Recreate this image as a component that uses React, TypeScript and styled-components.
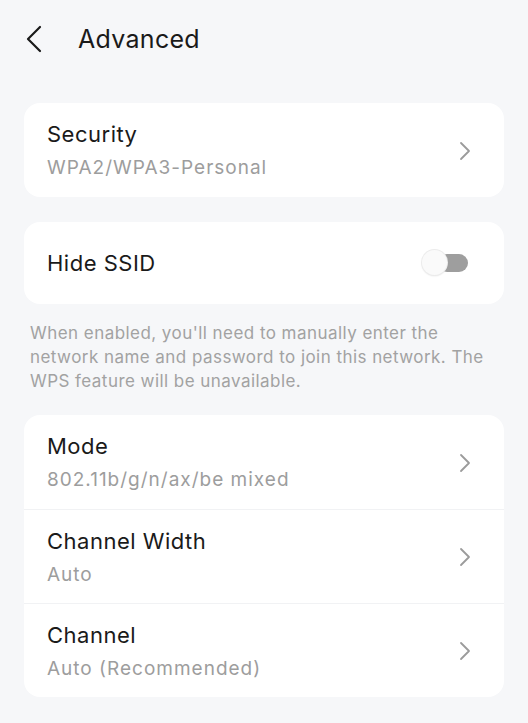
import styled, { createGlobalStyle } from 'styled-components'

const GlobalStyle = createGlobalStyle`
    html, body {
        margin: 0;
        padding: 0;
        background: #f6f7f9;
    }
    body {
        font-family: Inter, "Noto Sans", "Liberation Sans", sans-serif;
        -webkit-font-smoothing: antialiased;
    }
`

const rows = [
    { title: 'Mode', value: '802.11b/g/n/ax/be mixed' },
    { title: 'Channel Width', value: 'Auto' },
    { title: 'Channel', value: 'Auto (Recommended)' },
]

export default function App() {
    return (
        <Page>
            <GlobalStyle />
            <Header>
                <BackButton aria-label='back'>
                    <svg width='18' height='28' viewBox='0 0 18 28' fill='none'>
                        <path d='M15 2 L3 14 L15 26' stroke='#1a1a1a' strokeWidth='2.2' strokeLinecap='round' strokeLinejoin='round' />
                    </svg>
                </BackButton>
                <Title>Advanced</Title>
            </Header>

            <Card>
                <Row>
                    <RowText>
                        <RowTitle>Security</RowTitle>
                        <RowValue>WPA2/WPA3-Personal</RowValue>
                    </RowText>
                    <Chevron />
                </Row>
            </Card>

            <Card $gap={25}>
                <ToggleRow>
                    <RowTitle>Hide SSID</RowTitle>
                    <Toggle>
                        <Track />
                        <Knob />
                    </Toggle>
                </ToggleRow>
            </Card>

            <Hint>
                When enabled, you'll need to manually enter the network name and password to join this network. The WPS
                feature will be unavailable.
            </Hint>

            <Card $gap={22}>
                {rows.map((r, i) => (
                    <Row key={r.title} $divider={i > 0}>
                        <RowText>
                            <RowTitle>{r.title}</RowTitle>
                            <RowValue>{r.value}</RowValue>
                        </RowText>
                        <Chevron />
                    </Row>
                ))}
            </Card>
        </Page>
    )
}

function Chevron() {
    return (
        <ChevronWrap>
            <svg width='14' height='20' viewBox='0 0 14 20' fill='none'>
                <path d='M3 2 L11 10 L3 18' stroke='#9b9b9b' strokeWidth='1.8' strokeLinecap='round' strokeLinejoin='round' />
            </svg>
        </ChevronWrap>
    )
}

const Page = styled.div`
    min-height: 723px;
    box-sizing: border-box;
    padding: 0 24px 20px;
    display: flex;
    flex-direction: column;
`

const Header = styled.div`
    height: 78px;
    display: flex;
    align-items: center;
`

const BackButton = styled.button`
    background: none;
    border: none;
    padding: 0;
    margin-left: 1px;
    width: 20px;
    height: 28px;
    display: flex;
    align-items: center;
    cursor: pointer;
`

const Title = styled.h1`
    margin: 0 0 0 33px;
    font-size: 25px;
    font-weight: 400;
    color: #1a1a1a;
    letter-spacing: 0.3px;
`

const Card = styled.div<{ $gap?: number }>`
    margin-top: ${(p) => p.$gap ?? 25}px;
    background: #fff;
    border-radius: 16px;
    overflow: hidden;
`

const Row = styled.div<{ $divider?: boolean }>`
    height: 94px;
    box-sizing: border-box;
    padding: 16px 24px 15px 23px;
    display: flex;
    align-items: center;
    justify-content: space-between;
    border-top: ${(p) => (p.$divider ? '1px solid #f1f2f4' : 'none')};
`

const ToggleRow = styled.div`
    height: 82px;
    box-sizing: border-box;
    padding: 0 36px 0 23px;
    display: flex;
    align-items: center;
    justify-content: space-between;
`

const RowText = styled.div`
    display: flex;
    flex-direction: column;
    gap: 5px;
`

const RowTitle = styled.div`
    font-size: 22px;
    line-height: 30px;
    letter-spacing: 0.5px;
    color: #1a1a1a;
`

const RowValue = styled.div`
    font-size: 19px;
    line-height: 28px;
    letter-spacing: 1px;
    color: #9d9d9d;
`

const ChevronWrap = styled.div`
    width: 14px;
    height: 20px;
    margin-right: 8px;
    display: flex;
`

const Toggle = styled.div`
    position: relative;
    width: 46px;
    height: 28px;
`

const Track = styled.div`
    position: absolute;
    right: 0;
    top: 5px;
    width: 30px;
    height: 18px;
    border-radius: 9px;
    background: #9e9e9e;
`

const Knob = styled.div`
    position: absolute;
    left: 0;
    top: 1px;
    width: 25px;
    height: 25px;
    border-radius: 50%;
    background: #fafafa;
    box-shadow: 0 0 0 1px #ececec, 0 1px 2px rgba(0, 0, 0, 0.12);
`

const Hint = styled.p`
    margin: 17px 0 0;
    padding: 0 6px;
    font-size: 17px;
    line-height: 24px;
    letter-spacing: 0.45px;
    color: #a2a2a2;
`
